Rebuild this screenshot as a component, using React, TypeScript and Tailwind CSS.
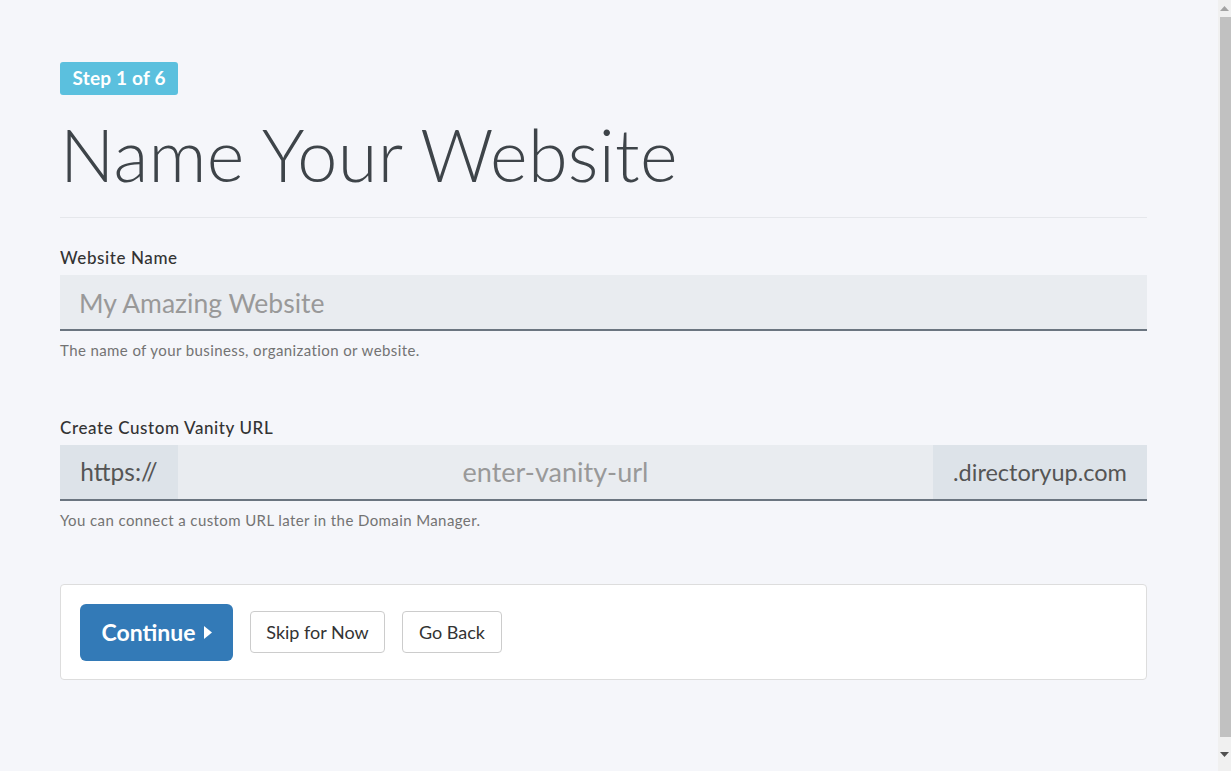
export default function App() {
  return (
    <div
      className="min-h-[771px] bg-[#f5f6fa] text-[#333]"
      style={{ fontFamily: "Lato, 'Open Sans', sans-serif" }}
    >
      <div className="w-[1087px] ml-[60px] pt-[62px]">
        {/* Step badge */}
        <span className="inline-flex h-[33px] items-center rounded-[3px] bg-[#5bc0de] px-[12.5px] text-[19px] font-bold tracking-[0.2px] text-white">
          Step 1 of 6
        </span>

        <h1 className="mt-[15px] text-[72px] font-light leading-[88px] text-[#3e4449] tracking-[0.3px]">
          Name Your Website
        </h1>

        <div className="mt-[19px] h-px bg-[#e5e7eb]" />

        {/* Website name */}
        <div className="mt-[29px]">
          <label className="block text-[17px] font-medium leading-[22px] tracking-[0.6px] text-[#333]">
            Website Name
          </label>
          <div className="mt-[6px] flex h-[56px] items-center border-b-2 border-[#6b7580] bg-[#e9ecf0] px-[19px] pt-[3px]">
            <span className="text-[26.5px] text-[#999]">My Amazing Website</span>
          </div>
          <p className="mt-[8px] text-[15px] tracking-[0.4px] text-[#737373]">
            The name of your business, organization or website.
          </p>
        </div>

        {/* Vanity URL */}
        <div className="mt-[55px]">
          <label className="block text-[17px] font-medium leading-[22px] tracking-[0.6px] text-[#333]">
            Create Custom Vanity URL
          </label>
          <div className="mt-[6px] flex h-[56px] border-b-2 border-[#6b7580] bg-[#e9ecf0]">
            <div className="flex w-[118px] items-center justify-center bg-[#dde3e9] pt-[2px] text-[24.5px] text-[#555]">
              https://
            </div>
            <div className="flex flex-1 items-center justify-center pt-[2px] text-[27px] text-[#999]">
              enter-vanity-url
            </div>
            <div className="flex w-[214px] items-center justify-center bg-[#dde3e9] pt-[2px] text-[23.5px] text-[#555]">
              .directoryup.com
            </div>
          </div>
          <p className="mt-[8px] text-[15px] tracking-[0.4px] text-[#737373]">
            You can connect a custom URL later in the Domain Manager.
          </p>
        </div>

        {/* Actions */}
        <div className="mt-[53px] flex h-[96px] items-center gap-[17px] rounded-[4px] border border-[#ddd] bg-white px-[19px]">
          <button className="flex h-[57px] w-[153px] items-center justify-center gap-[8px] rounded-[6px] bg-[#337ab7] text-[23px] font-bold text-white">
            Continue
            <svg width="8" height="13" viewBox="0 0 8 13">
              <path d="M0 0 L8 6.5 L0 13 Z" fill="white" />
            </svg>
          </button>
          <button className="h-[42px] w-[135px] rounded-[4px] border border-[#ccc] bg-white text-[18px] text-[#333]">
            Skip for Now
          </button>
          <button className="h-[42px] w-[100px] rounded-[4px] border border-[#ccc] bg-white text-[18px] text-[#333]">
            Go Back
          </button>
        </div>
      </div>

      {/* browser scrollbar */}
      <div className="fixed right-0 top-0 flex h-[771px] w-[13px] flex-col bg-[#f0f0f0]">
        <div className="flex h-[17px] items-center justify-center">
          <svg width="9" height="5" viewBox="0 0 9 5">
            <path d="M0 5 L4.5 0 L9 5 Z" fill="#a3a3a3" />
          </svg>
        </div>
        <div className="ml-[2px] h-[720px] bg-[#c1c1c1]" />
        <div className="flex flex-1 items-center justify-center">
          <svg width="9" height="5" viewBox="0 0 9 5">
            <path d="M0 0 L9 0 L4.5 5 Z" fill="#505050" />
          </svg>
        </div>
      </div>
    </div>
  );
}
